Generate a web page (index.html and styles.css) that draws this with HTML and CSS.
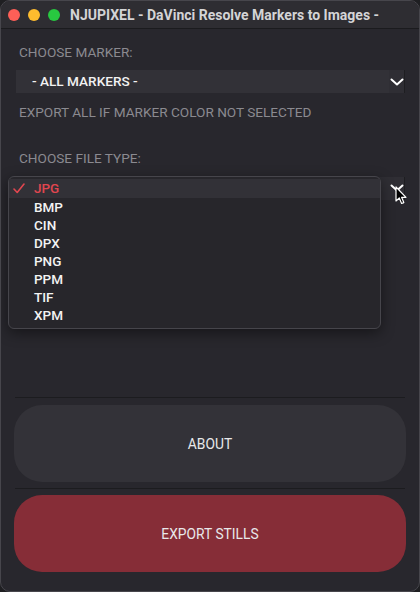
FILE: index.html
```html
<!DOCTYPE html>
<html lang="en">
<head>
<meta charset="utf-8">
<title>NJUPIXEL - DaVinci Resolve Markers to Images -</title>
<link rel="stylesheet" href="styles.css">
</head>
<body>
<div class="window">
  <header class="titlebar">
    <div class="lights">
      <span class="light red"></span>
      <span class="light yellow"></span>
      <span class="light green"></span>
    </div>
    <div class="title">NJUPIXEL - DaVinci Resolve Markers to Images -</div>
  </header>
  <main class="content">
    <div class="label">CHOOSE MARKER:</div>
    <div class="select">
      <div class="select-value">- ALL MARKERS -</div>
      <div class="select-arrow">
        <svg width="14" height="8" viewBox="0 0 14 8"><polyline points="1.5,1.5 7,6.5 12.5,1.5" fill="none" stroke="#ffffff" stroke-width="2" stroke-linecap="round" stroke-linejoin="round"/></svg>
      </div>
    </div>
    <div class="hint">EXPORT ALL IF MARKER COLOR NOT SELECTED</div>
    <div class="label label-2">CHOOSE FILE TYPE:</div>
    <div class="select select-file">
      <div class="select-value"></div>
      <div class="select-arrow arrow-open">
        <svg width="14" height="8" viewBox="0 0 14 8"><polyline points="1.5,1.5 7,6.5 12.5,1.5" fill="none" stroke="#ffffff" stroke-width="2" stroke-linecap="round" stroke-linejoin="round"/></svg>
      </div>
      <ul class="popup">
        <li class="item selected">
          <svg class="check" width="12" height="11" viewBox="0 0 12 11"><polyline points="1,6 4.2,9.5 11,1" fill="none" stroke="#e0464f" stroke-width="1.6" stroke-linecap="round" stroke-linejoin="round"/></svg>
          JPG
        </li>
        <li class="item">BMP</li>
        <li class="item">CIN</li>
        <li class="item">DPX</li>
        <li class="item">PNG</li>
        <li class="item">PPM</li>
        <li class="item">TIF</li>
        <li class="item">XPM</li>
      </ul>
      <svg class="cursor" width="13" height="19" viewBox="0 0 13 19"><path d="M1 1 L1 15 L4.3 12 L6.6 17.5 L8.8 16.6 L6.6 11.3 L11 11.3 Z" fill="#000000" stroke="#ffffff" stroke-width="1.2" stroke-linejoin="round"/></svg>
    </div>
    <div class="rule rule-top"></div>
    <button class="btn btn-about">ABOUT</button>
    <div class="rule"></div>
    <button class="btn btn-export">EXPORT STILLS</button>
  </main>
</div>
</body>
</html>
```

FILE: styles.css
```css
* { box-sizing: border-box; }
html, body {
  margin: 0;
  padding: 0;
  background: #1f1f22;
  width: 420px;
  height: 592px;
  overflow: hidden;
}
body {
  font-family: Roboto, "Liberation Sans", Arial, sans-serif;
  font-size: 13.6px;
}
.window {
  width: 420px;
  height: 592px;
  border: 1px solid #47464c;
  border-radius: 10px;
  background: #28272d;
  display: flex;
  flex-direction: column;
  overflow: hidden;
}
.titlebar {
  height: 28px;
  flex: none;
  display: flex;
  align-items: center;
  background: #2e2d32;
  border-bottom: 1px solid #1b1b1e;
  padding-left: 7px;
}
.lights {
  display: flex;
  gap: 8px;
}
.light {
  width: 12px;
  height: 12px;
  border-radius: 50%;
  display: block;
}
.red { background: #fe5f57; }
.yellow { background: #febc2e; }
.green { background: #28c840; }
.title {
  margin-left: 10px;
  font-weight: bold;
  font-size: 14px;
  color: #d4d4d6;
  white-space: nowrap;
}
.content {
  flex: 1;
  display: flex;
  flex-direction: column;
  padding: 15px 13px 19px 13px;
}
.label, .hint {
  color: #8b8a90;
  line-height: 16px;
  padding-left: 5px;
}
.select {
  position: relative;
  display: flex;
  height: 23px;
  margin: 10px 2px 0 2px;
  width: 388px;
}
.select-value {
  flex: 1;
  background: #323137;
  color: #f2f2f2;
  font-weight: 500;
  line-height: 23px;
  padding-left: 16px;
}
.select-arrow {
  width: 15px;
  background: #2f2e34;
  box-shadow: 1px 0 0 #1e1e21;
  display: flex;
  align-items: center;
  justify-content: center;
}
.select-arrow svg { margin-top: 1px; }
.hint { margin-top: 11px; }
.label-2 { margin-top: 30px; }
.select-file { margin-top: 11px; }
.select-file .select-value { background: #2f2e34; }
.arrow-open { align-items: flex-start; }
.arrow-open svg { margin-top: 7px; }
.popup {
  position: absolute;
  left: -8px;
  top: -1px;
  width: 373px;
  margin: 0;
  padding: 2px 0 4px 0;
  list-style: none;
  background: #27262b;
  border: 1px solid #46454b;
  border-radius: 6px;
  box-shadow: 0 4px 14px rgba(0, 0, 0, 0.45);
  z-index: 2;
}
.item {
  position: relative;
  height: 18px;
  line-height: 18px;
  padding-left: 25px;
  color: #f3f3f3;
  font-weight: 500;
  font-size: 13.5px;
}
.item.selected {
  background: #323137;
  color: #e0464f;
  height: 19px;
  line-height: 19px;
}
.check {
  position: absolute;
  left: 4px;
  top: 4px;
}
.cursor {
  position: absolute;
  left: 379px;
  top: 9px;
  z-index: 3;
}
.rule {
  height: 1px;
  background: #1c1c1f;
  margin: 6px 1px 0 1px;
  flex: none;
}
.rule-top { margin-top: auto; }
.btn {
  flex: none;
  height: 77px;
  border: none;
  border-radius: 28px;
  font-family: Roboto, "Liberation Sans", Arial, sans-serif;
  font-size: 13.8px;
  color: #e8e8ea;
  width: 392px;
  cursor: pointer;
}
.btn-about { background: #333238; margin-top: 7px; }
.btn-export { background: #862d37; margin-top: 6px; }
```
